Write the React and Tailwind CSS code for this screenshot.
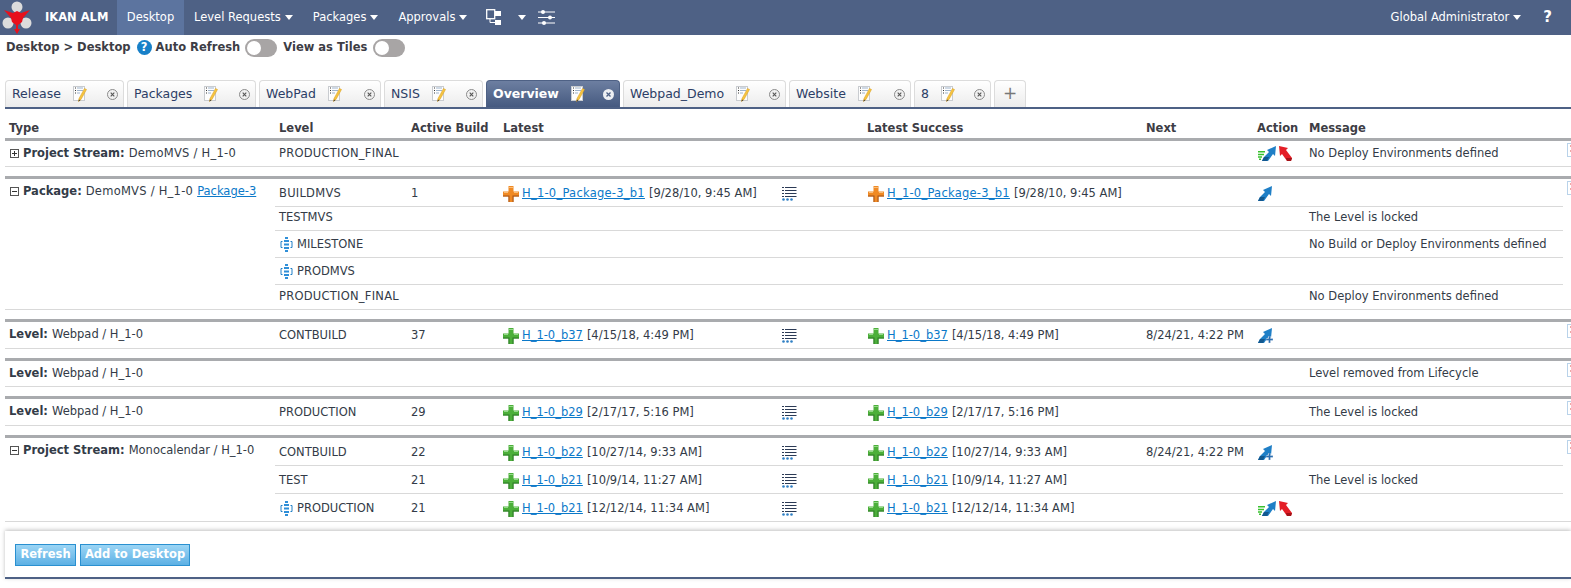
import { useState } from 'react'

const tabs = [
  { name: 'Release', w: 'w-[119px]' },
  { name: 'Packages', w: 'w-[129px]' },
  { name: 'WebPad', w: 'w-[122px]' },
  { name: 'NSIS', w: 'w-[99px]' },
  { name: 'Overview', w: 'w-[134px]', active: true },
  { name: 'Webpad_Demo', w: 'w-[163px]' },
  { name: 'Website', w: 'w-[122px]' },
  { name: '8', w: 'w-[77px]' },
]

const groups = [
  {
    label: 'Project Stream:', text: 'DemoMVS / H_1-0', toggle: 'plus', wide: true,
    rows: [{ h: 'h-[25px]', level: 'PRODUCTION_FINAL', wide: true, action: 'both', message: 'No Deploy Environments defined' }],
  },
  {
    label: 'Package:', text: 'DemoMVS / H_1-0', link: 'Package-3', toggle: 'minus', wide: true,
    rows: [
      { h: 'h-[28px]', level: 'BUILDMVS', active: '1', plus: 'orange', latest: 'H_1-0_Package-3_b1', wide: true, date: '[9/28/10, 9:45 AM]', action: 'up' },
      { h: 'h-[24px]', level: 'TESTMVS', message: 'The Level is locked' },
      { h: 'h-[27px]', level: 'MILESTONE', phase: true, message: 'No Build or Deploy Environments defined' },
      { h: 'h-[27px]', level: 'PRODMVS', phase: true },
      { h: 'h-[24px]', level: 'PRODUCTION_FINAL', wide: true, message: 'No Deploy Environments defined' },
    ],
  },
  {
    label: 'Level:', text: 'Webpad / H_1-0',
    rows: [{ h: 'h-[26px]', level: 'CONTBUILD', active: '37', plus: 'green', latest: 'H_1-0_b37', date: '[4/15/18, 4:49 PM]', next: '8/24/21, 4:22 PM', action: 'add' }],
  },
  {
    label: 'Level:', text: 'Webpad / H_1-0',
    rows: [{ h: 'h-[25px]', message: 'Level removed from Lifecycle' }],
  },
  {
    label: 'Level:', text: 'Webpad / H_1-0',
    rows: [{ h: 'h-[26px]', level: 'PRODUCTION', active: '29', plus: 'green', latest: 'H_1-0_b29', date: '[2/17/17, 5:16 PM]', message: 'The Level is locked' }],
  },
  {
    label: 'Project Stream:', text: 'Monocalendar / H_1-0', toggle: 'minus',
    rows: [
      { h: 'h-[28px]', level: 'CONTBUILD', active: '22', plus: 'green', latest: 'H_1-0_b22', date: '[10/27/14, 9:33 AM]', next: '8/24/21, 4:22 PM', action: 'add' },
      { h: 'h-[28px]', level: 'TEST', active: '21', plus: 'green', latest: 'H_1-0_b21', date: '[10/9/14, 11:27 AM]', message: 'The Level is locked' },
      { h: 'h-[27px]', level: 'PRODUCTION', phase: true, active: '21', plus: 'green', latest: 'H_1-0_b21', date: '[12/12/14, 11:34 AM]', action: 'both' },
    ],
  },
]

function Logo() {
  return (
    <svg width="35" height="35" viewBox="0 0 35 35" className="shrink-0">
      <circle cx="17" cy="7" r="5.500" fill="#dcdcdc" />
      <circle cx="8" cy="23" r="5.500" fill="#dcdcdc" />
      <circle cx="26" cy="23" r="5.500" fill="#dcdcdc" />
      <path d="M4 10l9 3 4-2 4 2 9-3-7 8-1 4-4 3v4h2l-3 5-3-5h2v-4l-4-3-1-4z" fill="#e8101c" />
    </svg>
  )
}

function Caret() {
  return <span className="ml-[4px] inline-block border-x-[4px] border-t-[5px] border-x-transparent border-t-white" />
}

function Toggle() {
  return (
    <span className="flex h-[18px] w-[32px] items-center rounded-full bg-[#a8a5a5] pl-[2px]">
      <span className="h-[14px] w-[14px] rounded-full bg-white" />
    </span>
  )
}

function NoteIcon() {
  return (
    <svg width="14" height="18" viewBox="0 0 14 18" className="shrink-0">
      <rect x="0.500" y="1.500" width="11" height="14" fill="#fdfdfd" stroke="#c9ccd0" />
      <path d="M2 3h1M2 5.500h1M2 8h1" stroke="#333" strokeWidth="1" />
      <path d="M4 3h6M4 5.500h6M4 8h3" stroke="#9fb4cc" strokeWidth="1" />
      <path d="M11.500 3.500l2 1-5.500 10-2.500 2 .5-3z" fill="#f5c542" stroke="#d99a1c" strokeWidth="0.500" />
      <path d="M5.500 16.500l.4-2 1.400.8z" fill="#333" />
    </svg>
  )
}

function CloseIcon({ active }) {
  if (active) {
    return (
      <svg width="11" height="11" viewBox="0 0 11 11" className="shrink-0">
        <circle cx="5.500" cy="5.500" r="5.500" fill="#eef0f3" />
        <path d="M3.500 3.500l4 4M7.500 3.500l-4 4" stroke="#4e6185" strokeWidth="1.300" />
      </svg>
    )
  }
  return (
    <svg width="11" height="11" viewBox="0 0 11 11" className="shrink-0">
      <circle cx="5.500" cy="5.500" r="5" fill="#f1f1f1" stroke="#8b8b8b" />
      <path d="M3.700 3.700l3.600 3.600M7.300 3.700l-3.600 3.600" stroke="#555" strokeWidth="1.100" />
    </svg>
  )
}

function PlusIcon({ color }) {
  const orange = color === 'orange'
  return (
    <svg width="16" height="16" viewBox="0 0 16 16" className="shrink-0">
      <path d="M5.500 0h5v5.500H16v5h-5.500V16h-5v-5.500H0v-5h5.500z" fill={orange ? '#f08a24' : '#4caf3a'} />
      <path d="M5.500 10.500H0v-1h6.500V16h-1zM10.500 10.500h5.500v-1h-6.500v6.500h1z" fill={orange ? '#a4521a' : '#2c7a26'} />
      <path d="M6 1h4v1H6zM1 6h4v1H1zM11 6h4v1h-4z" fill={orange ? '#f9be7a' : '#93d987'} />
    </svg>
  )
}

function ListIcon() {
  return (
    <svg width="15" height="14" viewBox="0 0 15 14" className="shrink-0">
      <path d="M0 .500h2M0 3.500h2M0 6.500h2M0 9.500h2M3 .500h11.500M3 3.500h11.500M3 6.500h11.500M3 9.500h11.500" stroke="#2b3a55" strokeWidth="1.200" />
      <circle cx="1.500" cy="12.500" r="1.300" fill="#2f7fc4" />
      <circle cx="5.500" cy="12.500" r="1.300" fill="#2f7fc4" />
      <circle cx="9.500" cy="12.500" r="1.300" fill="#2f7fc4" />
    </svg>
  )
}

function BlueArrow() {
  return (
    <svg width="14" height="15" viewBox="0 0 14 15" className="shrink-0">
      <path d="M0 15l2-4 5-5-2-2 9-4-1 10-2-2-5 7z" fill="#1f7fc6" />
      <path d="M0 15l2-4h5l-2 4z" fill="#13588f" />
    </svg>
  )
}

function RedArrow() {
  return (
    <svg width="13" height="15" viewBox="0 0 13 15" className="shrink-0">
      <path d="M0 0l9 2-2 2 6 8-1 3h-4L3 8 1 10z" fill="#e41e26" />
      <path d="M13 12l-1 3H8l-1-3z" fill="#a31218" />
    </svg>
  )
}

function Actions({ type }) {
  if (type === 'up') return <BlueArrow />
  if (type === 'add') {
    return (
      <span className="relative block h-[15px] w-[14px]">
        <BlueArrow />
        <svg width="7" height="7" viewBox="0 0 7 7" className="absolute bottom-0 right-[-1px]">
          <path d="M2.500 0h2v2.500H7v2H4.500V7h-2V4.500H0v-2h2.500z" fill="#2d6fb0" stroke="#fff" strokeWidth="0.300" />
        </svg>
      </span>
    )
  }
  return (
    <span className="ml-[-1px] flex items-center">
      <svg width="8" height="9" viewBox="0 0 8 9" className="mt-[3px] shrink-0">
        <path d="M1 .800h7M1 3.500h6M1 6h4M2 8.200h2" stroke="#39c12f" strokeWidth="1.500" />
      </svg>
      <span className="ml-[-3px]"><BlueArrow /></span>
      <span className="ml-[3px]"><RedArrow /></span>
    </span>
  )
}

function PhaseIcon() {
  return (
    <svg width="13" height="15" viewBox="0 0 13 15" className="ml-[1px] mr-[4px] shrink-0">
      <path d="M2.500 4.500H1v6h1.500M10.500 4.500H12v6h-1.500" fill="none" stroke="#1f7fc6" strokeWidth="1" />
      <path d="M5 1h3M4 4h5M4 7.500h5M4 11h5M5 14h3" stroke="#2f8fd8" strokeWidth="1.800" />
    </svg>
  )
}

function Toggler({ type }) {
  return (
    <span className="ml-[1px] mr-[4px] flex h-[9px] w-[9px] shrink-0 items-center justify-center border border-[#555]">
      <svg width="7" height="7" viewBox="0 0 7 7">
        {type === 'plus' ? <path d="M1 3.500h5M3.500 1v5" stroke="#333" /> : <path d="M1 3.500h5" stroke="#333" />}
      </svg>
    </span>
  )
}

function RowEdge() {
  return (
    <svg width="12" height="14" viewBox="0 0 12 14" className="absolute left-[1562px] top-[2px]">
      <rect x="0.500" y="0.500" width="12" height="13" fill="#fff" stroke="#b9d3ea" />
      <path d="M3 3h2M3 8h2" stroke="#d9534f" />
    </svg>
  )
}

function LatestCell({ row, w }) {
  return (
    <span className={`flex h-[17px] items-center ${w}`}>
      {row.latest && (
        <>
          <PlusIcon color={row.plus} />
          <a className={`ml-[3px] text-[#0b79c9] underline ${row.wide ? 'tracking-[0.25px]' : ''}`}>{row.latest}</a>
          <span className="ml-[4px]">{row.date}</span>
        </>
      )}
    </span>
  )
}

function Row({ row, last }) {
  return (
    <div className={`flex items-end pb-[4px] pl-[4px] leading-[17px] ${row.h} ${last ? '' : 'border-b border-[#d9d9d9]'}`}>
      <span className={`flex h-[17px] w-[132px] shrink-0 items-center ${row.wide ? 'tracking-[0.25px]' : ''}`}>
        {row.phase && <PhaseIcon />}
        {row.level}
      </span>
      <span className="w-[92px] shrink-0">{row.active}</span>
      <LatestCell row={row} w="w-[279px] shrink-0" />
      <span className="flex h-[17px] w-[86px] shrink-0 items-center">{row.latest && <ListIcon />}</span>
      <LatestCell row={row} w="w-[278px] shrink-0" />
      <span className="w-[112px] shrink-0">{row.next}</span>
      <span className="flex h-[17px] w-[51px] shrink-0 items-center">{row.action && <Actions type={row.action} />}</span>
      <span className="whitespace-nowrap">{row.message}</span>
    </div>
  )
}

function Group({ group }) {
  return (
    <div className="relative mb-[9px] flex border-t-[3px] border-b border-t-[#a9abae] border-b-[#d9d9d9]">
      <div className="flex w-[270px] shrink-0 items-start pl-[4px]">
        <div className="flex h-[25px] items-center whitespace-nowrap">
          {group.toggle && <Toggler type={group.toggle} />}
          <b className="mr-[4px] font-bold">{group.label}</b>
          <span className={group.wide ? 'tracking-[0.25px]' : ''}>{group.text}</span>
          {group.link && <a className="ml-[4px] text-[#0b79c9] underline">{group.link}</a>}
        </div>
      </div>
      <div className="w-[1288px] shrink-0">
        {group.rows.map((row, i) => (
          <Row key={i} row={row} last={i === group.rows.length - 1} />
        ))}
      </div>
      <RowEdge />
    </div>
  )
}

export default function App() {
  const [tilesOn] = useState(false)
  return (
    <div className="h-[588px] w-[1571px] overflow-hidden bg-white font-['DejaVu_Sans','Liberation_Sans',sans-serif] text-[11.500px] text-[#333b47]">
      {/* top bar */}
      <div className="flex h-[35px] items-center bg-[#4e6185] text-white">
        <span className="flex w-[45px]"><Logo /></span>
        <span className="w-[72px] font-bold">IKAN ALM</span>
        <span className="flex h-full w-[67px] items-center justify-center bg-[#5c749f]">Desktop</span>
        <span className="ml-[10px]">Level Requests</span><Caret />
        <span className="ml-[20px]">Packages</span><Caret />
        <span className="ml-[20px]">Approvals</span><Caret />
        <svg width="15" height="17" viewBox="0 0 15 17" className="ml-[19px]">
          <rect x="0.700" y="0.700" width="8" height="9" fill="none" stroke="#fff" strokeWidth="1.300" />
          <rect x="9" y="2" width="6" height="5" fill="#fff" />
          <rect x="9" y="11" width="6" height="5" fill="#fff" />
          <path d="M4 10v3.500h5" fill="none" stroke="#fff" />
        </svg>
        <span className="ml-[17px] inline-block border-x-[4px] border-t-[5px] border-x-transparent border-t-white" />
        <svg width="17" height="15" viewBox="0 0 17 15" className="ml-[12px]">
          <path d="M0 2h17M0 7.500h17M0 13h17" stroke="#fff" />
          <circle cx="5" cy="2" r="2" fill="#fff" />
          <circle cx="12" cy="7.500" r="2" fill="#fff" />
          <circle cx="6" cy="13" r="2" fill="#fff" />
        </svg>
        <span className="ml-auto">Global Administrator</span><Caret />
        <span className="mr-[19px] ml-[22px] text-[15px] font-bold">?</span>
      </div>

      {/* breadcrumb */}
      <div className="flex h-[25px] items-center pl-[6px] font-bold text-[#3d3d45]">
        <span>Desktop &gt; Desktop</span>
        <span className="ml-[6px] mr-[4px] flex h-[15px] w-[15px] items-center justify-center rounded-full bg-[#1880c8] text-white">?</span>
        <span>Auto Refresh</span>
        <span className="ml-[5px] mr-[6px]"><Toggle /></span>
        <span>View as Tiles</span>
        <span className="ml-[6px]">{!tilesOn && <Toggle />}</span>
      </div>

      {/* tabs */}
      <div className="mt-[20px] flex h-[27px] items-end gap-[3px] pl-[5px]">
        {tabs.map((t) => (
          <div
            key={t.name}
            className={`flex h-[27px] shrink-0 items-center rounded-t-[4px] border border-b-0 text-[12.500px] ${t.w} ${
              t.active
                ? 'border-[#4e6185] bg-gradient-to-b from-[#6d7fa1] to-[#465a80] font-bold text-white'
                : 'border-[#dcdcdc] bg-gradient-to-b from-white to-[#ececec] text-[#2c3e66]'
            }`}
          >
            <span className="ml-[6px] mr-[12px]">{t.name}</span>
            <NoteIcon />
            <span className="mr-[5px] ml-auto"><CloseIcon active={t.active} /></span>
          </div>
        ))}
        <div className="flex h-[27px] w-[32px] shrink-0 items-center justify-center rounded-t-[4px] border border-b-0 border-[#dcdcdc] bg-gradient-to-b from-white to-[#ececec] text-[17px] text-[#777]">+</div>
      </div>

      {/* table */}
      <div className="ml-[5px] border-t-[2px] border-[#4e6185]">
        <div className="flex h-[29px] items-end pb-[1px] pl-[4px] font-bold text-[#3d3d45]">
          <span className="w-[270px] shrink-0">Type</span>
          <span className="w-[132px] shrink-0">Level</span>
          <span className="w-[92px] shrink-0">Active Build</span>
          <span className="w-[364px] shrink-0">Latest</span>
          <span className="w-[279px] shrink-0">Latest Success</span>
          <span className="w-[111px] shrink-0">Next</span>
          <span className="w-[52px] shrink-0">Action</span>
          <span>Message</span>
        </div>
        {groups.map((g, i) => (
          <Group key={i} group={g} />
        ))}
      </div>

      {/* footer */}
      <div className="ml-[5px] flex h-[48px] items-center border-b-[2px] border-[#4e6185] bg-white pl-[10px] pt-[1px] shadow-[0_-1px_4px_rgba(0,0,0,0.25)]">
        <button className="h-[22px] w-[61px] border border-[#2a90d0] bg-gradient-to-b from-[#9bd5f5] to-[#5cb0e4] text-[11.500px] font-bold text-white">Refresh</button>
        <button className="ml-[4px] h-[22px] w-[110px] border border-[#2a90d0] bg-gradient-to-b from-[#9bd5f5] to-[#5cb0e4] text-[11.500px] font-bold text-white">Add to Desktop</button>
      </div>
    </div>
  )
}
